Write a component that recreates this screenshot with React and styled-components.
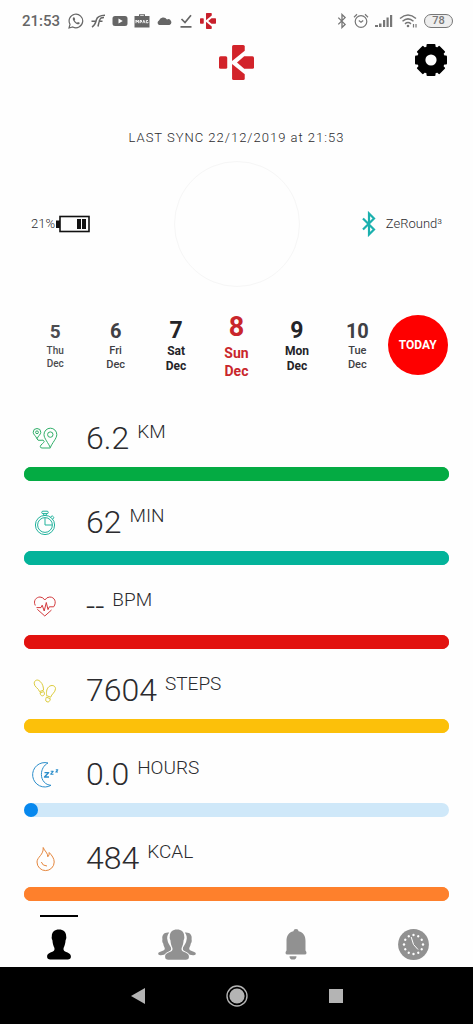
import React from 'react';
import styled, { createGlobalStyle } from 'styled-components';

const GlobalStyle = createGlobalStyle`
  * { box-sizing: border-box; }
  body {
    margin: 0;
    background: #fefefe;
    color: #2b2b2e;
    font-family: Roboto, "Liberation Sans", sans-serif;
  }
  button {
    padding: 0;
    border: 0;
    background: none;
    font: inherit;
    color: inherit;
    cursor: pointer;
  }
  svg { display: block; }
`;

const Screen = styled.div`
  display: flex;
  flex-direction: column;
  min-height: 100vh;
`;

const StatusBar = styled.div`
  display: flex;
  justify-content: space-between;
  align-items: center;
  height: 42px;
  padding: 0 20px 0 22px;
  color: #666;
`;

const StatusGroup = styled.div`
  display: flex;
  align-items: center;
  gap: 6px;
  color: ${(p) => p.$color};
`;

const Clock = styled.time`
  width: 40px;
  font-size: 15px;
  line-height: 20px;
  font-weight: 500;
`;

const BatteryPill = styled.span`
  width: 29px;
  height: 14px;
  border: 1px solid #777;
  border-radius: 7px;
  background: #eee;
  font-size: 11px;
  line-height: 12px;
  font-weight: 500;
  text-align: center;
`;

const Header = styled.header`
  display: grid;
  grid-template-columns: 1fr auto 1fr;
  align-items: center;
  height: 40px;
  padding: 0 26px;
`;

const SettingsButton = styled.button`
  grid-column: 3;
  justify-self: end;
  padding-bottom: 4px;
`;

const Brand = styled.div`
  grid-column: 2;
`;

const SyncText = styled.p`
  margin: 46px 0 0;
  font-size: 13px;
  line-height: 20px;
  font-weight: 300;
  letter-spacing: 1px;
  text-align: center;
  color: #2b2b2e;
`;

const DeviceRow = styled.section`
  display: grid;
  grid-template-columns: 1fr auto 1fr;
  align-items: center;
  margin-top: 13px;
  padding: 0 31px;
  font-size: 13px;
  line-height: 20px;
  font-weight: 300;
  color: #2b2b2e;
`;

const DeviceInfo = styled.div`
  display: flex;
  align-items: center;
  justify-self: ${(p) => p.$side};
  gap: ${(p) => p.$gap}px;
`;

const TealBluetooth = styled.span`
  color: #1bb0ae;
`;

const WatchRing = styled.div`
  width: 126px;
  height: 126px;
  border: 1px solid #f6f6f6;
  border-radius: 50%;
`;

const Days = styled.nav`
  display: grid;
  grid-template-columns: repeat(7, 1fr);
  align-items: center;
  height: 70px;
  margin-top: 23px;
  padding: 0 25px;
`;

const daySizes = {
  small: { num: 19, numLine: 24, label: 10, labelLine: 13, color: '#4c4c50' },
  medium: { num: 20, numLine: 26, label: 11, labelLine: 14, color: '#404044' },
  large: { num: 23, numLine: 27, label: 12, labelLine: 15, color: '#242428' },
  current: { num: 27, numLine: 34, label: 14, labelLine: 18, color: '#c9262c' },
};

const Day = styled.button`
  display: flex;
  flex-direction: column;
  align-items: center;
  color: ${(p) => daySizes[p.$size].color};
  font-size: ${(p) => daySizes[p.$size].label}px;
  line-height: ${(p) => daySizes[p.$size].labelLine}px;
  font-weight: ${(p) => (p.$size === 'large' || p.$size === 'current' ? 700 : 500)};
`;

const DayNumber = styled.span`
  font-size: ${(p) => daySizes[p.$size].num}px;
  line-height: ${(p) => daySizes[p.$size].numLine}px;
  font-weight: 700;
`;

const TodayButton = styled.button`
  justify-self: center;
  width: 60px;
  height: 60px;
  border-radius: 50%;
  background: #fe0000;
  color: #fff;
  font-size: 12px;
  font-weight: 700;
`;

const Metrics = styled.main`
  padding: 17px 24px 0;
`;

const Metric = styled.section`
  display: flex;
  flex-direction: column;
  justify-content: flex-end;
  height: 84px;
`;

const MetricHead = styled.div`
  display: grid;
  grid-template-columns: 42px 1fr;
  column-gap: 20px;
  align-items: center;
  justify-items: center;
  height: 56px;
`;

const Reading = styled.p`
  display: flex;
  justify-self: start;
  align-items: flex-start;
  gap: 8px;
  margin: 0;
  padding-bottom: 2px;
`;

const Value = styled.span`
  font-size: 32px;
  line-height: 36px;
  font-weight: 300;
`;

const Unit = styled.span`
  font-size: 19px;
  line-height: 24px;
  font-weight: 300;
`;

const Track = styled.div`
  height: 14px;
  border-radius: 7px;
  background: ${(p) => p.$color};
`;

const Fill = styled.div`
  height: 14px;
  min-width: 14px;
  border-radius: 7px;
  background: ${(p) => p.$color};
`;

const TabBar = styled.nav`
  display: grid;
  grid-template-columns: repeat(4, 1fr);
  justify-items: center;
  height: 52px;
  margin-top: auto;
`;

const Tab = styled.button`
  width: 38px;
  border-top: 2px solid ${(p) => (p.$active ? '#000' : 'transparent')};
  color: ${(p) => (p.$active ? '#000' : '#919191')};
  padding: 12px 0 7px;

  svg { margin: 0 auto; }
`;

const SystemBar = styled.footer`
  display: grid;
  grid-template-columns: repeat(3, 1fr);
  align-items: center;
  justify-items: center;
  height: 57px;
  padding: 0 88px;
  background: #000;
  color: #b4b4b4;
`;

const Logo = ({ size, color }) => (
  <svg width={size} height={size} viewBox="0 0 34 34" fill={color} aria-hidden="true">
    <rect x="0" y="11" width="8" height="12" rx="1.5" />
    <path d="M14.200 0H23.500Q25 0 25 1.500V5.500L12.700 15.500V1.500Q12.700 0 14.200 0Z" />
    <path d="M14.200 34H23.500Q25 34 25 32.500V28.500L12.700 18.500V32.500Q12.700 34 14.200 34Z" />
    <path d="M17.500 17L24.500 11H32.500Q34 11 34 12.500V21.500Q34 23 32.500 23H24.500Z" />
  </svg>
);

const WhatsApp = () => (
  <svg width="16" height="16" viewBox="0 0 16 16" fill="none" stroke="currentColor" strokeWidth="1.200">
    <path d="M1 15L2 11.300A6.800 6.800 0 1 1 4.800 14Z" />
    <path d="M5.400 4.200C4.200 5.200 4.700 7 6.300 8.900C8.200 11 10.300 12 11.500 10.700L11.700 9.800L10 8.900L9 9.800Q7.400 9 6.600 7.300L7.200 6.300L6.500 4.500Z" fill="currentColor" stroke="none" />
  </svg>
);

const Feather = () => (
  <svg width="16" height="16" viewBox="0 0 16 16" fill="none" stroke="currentColor">
    <path d="M2 14Q5 12.500 6.500 6.500Q7.500 2.500 15 2.200M1.500 8.300H6M8.500 8.300H12.500M8 13.500Q9.500 6 11 5Q12 4.500 14 4.500" strokeWidth="1.500" />
  </svg>
);

const Video = () => (
  <svg width="16" height="16" viewBox="0 0 16 16" fill="currentColor">
    <path fillRule="evenodd" d="M3 3H13Q15.500 3 15.500 5.500V10.500Q15.500 13 13 13H3Q.5 13 .5 10.500V5.500Q.5 3 3 3ZM6.500 5.500V10.500L10.800 8Z" />
  </svg>
);

const Bag = () => (
  <svg width="16" height="16" viewBox="0 0 16 16" fill="currentColor">
    <path fillRule="evenodd" d="M5 3V1.200H11V3H15.500V14.500H.5V3ZM6.200 3H9.800V2.300H6.200Z" />
    <path d="M2 10.200V7L3.200 9L4.400 7V10.200M6 10.200V7.500H7.500V9H6M8.800 10.200L9.800 7.200L11 10.200M14 7.500H12.300V9.800H14V8.800" fill="none" stroke="#fefefe" strokeWidth=".9" />
  </svg>
);

const Cloud = () => (
  <svg width="16" height="16" viewBox="0 0 16 16" fill="currentColor">
    <path d="M3 12A2.500 2.500 0 0 1 3 7.500A4.500 4.500 0 0 1 11 6.500A2.800 2.800 0 0 1 13.500 12Z" />
  </svg>
);

const Check = () => (
  <svg width="16" height="16" viewBox="0 0 16 16" fill="none" stroke="currentColor" strokeWidth="1.700">
    <path d="M3.500 6L7 9.500L13 2.200M2.500 13.800H13.500" />
  </svg>
);

const Bluetooth = ({ width, height }) => (
  <svg width={width} height={height} viewBox="0 0 14 26" fill="none" stroke="currentColor" strokeWidth="2.200" aria-hidden="true">
    <path d="M1 7.500L12 18.500L7 23.500V2.500L12 7.500L1 18.500" />
  </svg>
);

const Alarm = () => (
  <svg width="16" height="16" viewBox="0 0 16 16" fill="none" stroke="currentColor" strokeWidth="1.200">
    <circle cx="8" cy="8.500" r="5.800" />
    <path d="M5.800 7.500L8 9.300L10.200 7.500M1 4.200L4 1.300M15 4.200L12 1.300" />
  </svg>
);

const Signal = () => (
  <svg width="18" height="14" viewBox="0 0 18 14" fill="currentColor">
    <path d="M0 11H3V13H0ZM4 9.500H6.500V13H4ZM8 6H10.200V13H8ZM11.500 3.500H13.700V13H11.500ZM15 1H17.200V13H15Z" />
  </svg>
);

const Wifi = () => (
  <svg width="19" height="16" viewBox="0 0 19 16" fill="none" stroke="currentColor" strokeWidth="1.500">
    <path d="M1 5.500Q9 -1.500 17 5.500M3.500 8.200Q9 3.500 14.500 8.200M6 10.800Q9 8.300 12 10.800" />
    <circle cx="9" cy="13" r="1.300" fill="currentColor" stroke="none" />
    <path d="M14.500 11V14.500M17 11V14.500" strokeWidth="1.200" />
  </svg>
);

const Gear = () => (
  <svg width="32" height="32" viewBox="0 0 32 32" aria-hidden="true">
    <circle cx="16" cy="16" r="14" />
    {[0, 45, 90, 135].map((a) => (
      <rect key={a} x="11.500" y="0" width="9" height="32" rx="1" transform={`rotate(${a} 16 16)`} />
    ))}
    <circle cx="16" cy="16" r="5.600" fill="#fefefe" />
  </svg>
);

const BatteryIcon = () => (
  <svg width="34" height="18" viewBox="0 0 34 18" aria-hidden="true">
    <rect x="4" y="1.500" width="29" height="15" fill="none" stroke="#111" strokeWidth="1.600" />
    <path d="M0 5.500H4V13H0ZM21 4H25V14H21ZM26 4H30V14H26Z" fill="#111" />
  </svg>
);

const lineIcons = {
  distance: (
    <>
      <path d="M19.300 22.700C17.500 18 13 13.500 13 9.600A6.400 6.400 0 0 1 25.800 9.600C25.800 13.500 21 18 19.300 22.700Z" />
      <circle cx="19.300" cy="9.600" r="2.700" />
      <path d="M6 13.800C5 11 2.200 9.500 2.200 7.300A3.800 3.800 0 0 1 9.800 7.300C9.800 9.500 7 11 6 13.800Z" />
      <circle cx="6" cy="7.300" r="1.400" />
      <path d="M6 13.800Q6.500 15.800 9 15.300Q13 14.500 13.200 16.300C13.300 18 9.300 19.500 9.300 21.500Q9.300 23 11 23H19.300" />
    </>
  ),
  time: (
    <>
      <circle cx="14" cy="16" r="9.600" />
      <circle cx="14" cy="16" r="7.400" />
      <rect x="10.700" y="2.200" width="6.600" height="2.400" rx="1.200" />
      <path d="M12.700 4.600V6.400M15.300 4.600V6.400M19.500 8L21.200 6.800L23 8.600L21.600 10.200M14 9V16H21" />
    </>
  ),
  heart: (
    <>
      <path d="M4.300 12.500C1.800 7.500 5.500 4 9 4Q12 4 13.800 7Q15.700 4 18.800 4C23.500 4 26 9 22.700 13.800M6.300 16.300L13.800 23L20.500 17" />
      <path d="M5.500 14.600H10L11.200 12.200L13.200 18L15.300 9.500L17 16.600L18.300 13.800H22.700" />
    </>
  ),
  steps: (
    <>
      <path d="M8.500 14.600C8 11.500 3 10 3.200 6.200C3.400 3 6.700 2 9 4.300C12 7 12.500 10.500 12.500 13.200Z" />
      <path d="M9 15.800L12.800 14.600C14.800 18.300 11.500 19.500 10.300 18.500Q9.300 17.600 9 15.800Z" />
      <path d="M15.600 18.600C15.500 16 15 12.300 17.800 9.800C20.500 7.400 24.500 8.500 24.500 11.700C24.400 15.500 20.500 17 19.700 20.200Z" />
      <path d="M15.400 20.200L19.300 21.700C19.200 24 17.700 25.600 15.900 24.800C14 24 14.700 21.800 15.400 20.200Z" />
    </>
  ),
  sleep: (
    <>
      <path d="M17 2A12.200 12.200 0 1 0 20 24.300C14.500 24 10.400 19.500 10.400 13.500C10.400 8.500 12.800 4.200 17 2Z" />
      <path d="M13.500 11.600H17.700L13.500 16H18" strokeWidth="1.400" />
      <path d="M19.700 10.300H22.200L19.700 13.200H22.500M24.800 8.800H26.800L24.800 11H27" strokeWidth="1.100" />
    </>
  ),
  energy: (
    <>
      <path d="M12.200 2.500C13.500 6 17 8 16.800 11.800Q18.500 10.300 18.200 7.500C21 10.500 23.200 13.500 23.200 17A8.600 8.600 0 0 1 6 17C6 12 12.800 10 12.200 2.500Z" />
      <path d="M10.300 17Q11.500 21 16 21" />
    </>
  ),
};

const LineIcon = ({ name, color }) => (
  <svg width="28" height="28" viewBox="0 0 28 28" fill="none" stroke={color} strokeWidth="1" strokeLinejoin="round" aria-hidden="true">
    {lineIcons[name]}
  </svg>
);

const personPath = 'M16 .5C20.500 .5 23.500 3 23.400 7.500C23.800 9 23.500 10.500 22.800 11.500C22.500 15.500 21.500 18 20.700 19.500V21.500C21.500 24.500 28.300 24 28.300 28.500C28.300 30.800 27 31.600 25 31.600H7C5 31.600 3.700 30.800 3.700 28.500C3.700 24 10.500 24.500 11.300 21.500V19.500C10.500 18 9.500 15.500 9.200 11.500C8.500 10.500 8.200 9 8.600 7.500C8.500 3 11.500 .5 16 .5Z';
const sidePath = 'M11.200 3.600C6 3 3.700 6 4.400 10.200C4 12 4.400 13.500 5.200 14.600C5.500 17 6.600 18.500 6.800 19.500C7 22.500 .2 22 .2 24.600C.2 26 1.200 26.400 3 26.200C6.500 26 12.800 23.500 13.200 20C13.400 17.500 10 15 9.600 11.500C8.700 9 9.200 6 11.200 3.600Z';

const Person = () => (
  <svg width="32" height="31" viewBox="0 0 32 32" fill="currentColor" aria-hidden="true">
    <path d={personPath} />
  </svg>
);

const People = () => (
  <svg width="38" height="31" viewBox="0 0 38 31" fill="currentColor" aria-hidden="true">
    <path d={sidePath} />
    <path d={sidePath} transform="translate(38 0) scale(-1 1)" />
    <path d={personPath} transform="translate(3.500 0) scale(.97)" stroke="#fefefe" strokeWidth="2" paintOrder="stroke" />
  </svg>
);

const Bell = () => (
  <svg width="22" height="31" viewBox="0 0 22 31" fill="currentColor" aria-hidden="true">
    <path d="M11 0Q13.300 0 13.600 2.300C18.500 3.500 20.500 7 20.500 12V21.500Q21.500 22.500 21.500 24Q21.500 25.500 19.500 25.500H2.500Q.5 25.500 .5 24Q.5 22.500 1.500 21.500V12C1.500 7 3.500 3.500 8.400 2.300Q8.700 0 11 0ZM4.500 27.200H11.500Q11.500 30.600 8 30.600Q4.500 30.600 4.500 27.200Z" />
  </svg>
);

const ClockFace = () => (
  <svg width="31" height="31" viewBox="0 0 31 31" aria-hidden="true">
    <circle cx="15.500" cy="15.500" r="15.400" fill="currentColor" />
    {Array.from({ length: 12 }, (_, i) => (
      <circle key={i} cx="15.500" cy="6" r="1.200" fill="#fff" transform={`rotate(${i * 30} 15.500 15.500)`} />
    ))}
    <path d="M13.200 8L15.500 15.500L20 20.500" fill="none" stroke="#fff" strokeWidth="1" />
  </svg>
);

const days = [
  { n: 5, name: 'Thu', size: 'small' },
  { n: 6, name: 'Fri', size: 'medium' },
  { n: 7, name: 'Sat', size: 'large' },
  { n: 8, name: 'Sun', size: 'current' },
  { n: 9, name: 'Mon', size: 'large' },
  { n: 10, name: 'Tue', size: 'medium' },
];

const metrics = [
  { icon: 'distance', value: '6.2', unit: 'KM', color: '#04ab43', stroke: '#2fae68', percent: 100 },
  { icon: 'time', value: '62', unit: 'MIN', color: '#03b39a', stroke: '#22b39d', percent: 100 },
  { icon: 'heart', value: '--', unit: 'BPM', color: '#e2120f', stroke: '#d33a3d', percent: 100 },
  { icon: 'steps', value: '7604', unit: 'STEPS', color: '#fcc00a', stroke: '#dccb3a', percent: 100 },
  { icon: 'sleep', value: '0.0', unit: 'HOURS', color: '#0788ee', track: '#cfe8f9', stroke: '#2c8ecb', percent: 0 },
  { icon: 'energy', value: '484', unit: 'KCAL', color: '#fe802c', stroke: '#e5873e', percent: 100 },
];

const tabs = [
  { label: 'Profile', Icon: Person, active: true },
  { label: 'Friends', Icon: People },
  { label: 'Alerts', Icon: Bell },
  { label: 'Watch', Icon: ClockFace },
];

export default function App() {
  return (
    <Screen>
      <GlobalStyle />
      <StatusBar>
        <StatusGroup $color="#666">
          <Clock>21:53</Clock>
          <WhatsApp />
          <Feather />
          <Video />
          <Bag />
          <Cloud />
          <Check />
          <Logo size={16} color="#c8202c" />
        </StatusGroup>
        <StatusGroup $color="#777">
          <Bluetooth width={10} height={16} />
          <Alarm />
          <Signal />
          <Wifi />
          <BatteryPill>78</BatteryPill>
        </StatusGroup>
      </StatusBar>

      <Header>
        <Brand>
          <Logo size={35} color="#d2232a" />
        </Brand>
        <SettingsButton aria-label="Settings">
          <Gear />
        </SettingsButton>
      </Header>

      <SyncText>LAST SYNC 22/12/2019 at 21:53</SyncText>

      <DeviceRow>
        <DeviceInfo $side="start" $gap={1}>
          21%
          <BatteryIcon />
        </DeviceInfo>
        <WatchRing />
        <DeviceInfo $side="end" $gap={10}>
          <TealBluetooth>
            <Bluetooth width={14} height={26} />
          </TealBluetooth>
          ZeRound³
        </DeviceInfo>
      </DeviceRow>

      <Days aria-label="Day">
        {days.map((d) => (
          <Day key={d.n} $size={d.size}>
            <DayNumber $size={d.size}>{d.n}</DayNumber>
            <span>{d.name}</span>
            <span>Dec</span>
          </Day>
        ))}
        <TodayButton>TODAY</TodayButton>
      </Days>

      <Metrics>
        {metrics.map((m) => (
          <Metric key={m.unit}>
            <MetricHead>
              <LineIcon name={m.icon} color={m.stroke} />
              <Reading>
                <Value>{m.value}</Value>
                <Unit>{m.unit}</Unit>
              </Reading>
            </MetricHead>
            <Track $color={m.track || m.color} role="progressbar" aria-label={m.unit} aria-valuenow={m.percent}>
              <Fill $color={m.color} style={{ width: `${m.percent}%` }} />
            </Track>
          </Metric>
        ))}
      </Metrics>

      <TabBar>
        {tabs.map(({ label, Icon, active }) => (
          <Tab key={label} $active={active} aria-label={label}>
            <Icon />
          </Tab>
        ))}
      </TabBar>

      <SystemBar>
        <button aria-label="Back">
          <svg width="14" height="16" viewBox="0 0 14 16" fill="currentColor"><path d="M0 8L14 0V16Z" /></svg>
        </button>
        <button aria-label="Home">
          <svg width="22" height="22" viewBox="0 0 22 22" fill="currentColor">
            <circle cx="11" cy="11" r="10" fill="none" stroke="currentColor" strokeWidth="1.400" />
            <circle cx="11" cy="11" r="7.600" />
          </svg>
        </button>
        <button aria-label="Recent apps">
          <svg width="14" height="14" viewBox="0 0 14 14" fill="currentColor"><rect width="14" height="14" /></svg>
        </button>
      </SystemBar>
    </Screen>
  );
}
